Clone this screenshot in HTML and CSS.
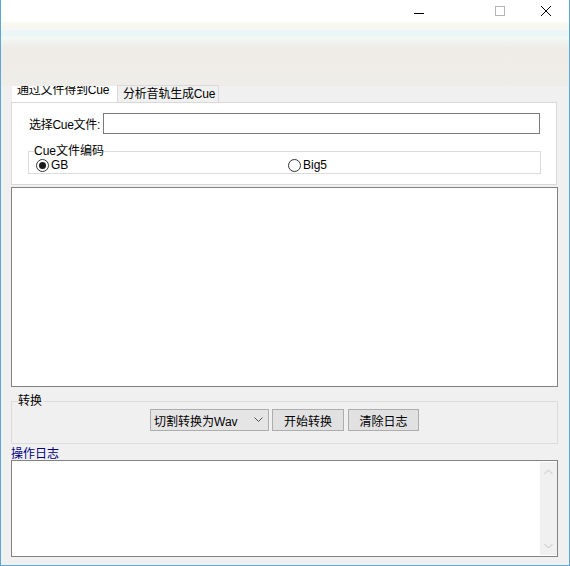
FILE: index.html
```html
<!DOCTYPE html>
<html lang="zh-CN">
<head>
    <meta charset="UTF-8">
    <title>Cue</title>
    <link rel="stylesheet" href="styles.css">
</head>
<body>
    <div class="window">
        <div class="titlebar">
            <span class="caption-btn btn-min">
                <svg width="12" height="12" viewBox="0 0 12 12"><path d="M1 6.5h10" stroke="#000" stroke-width="1"/></svg>
            </span>
            <span class="caption-btn">
                <svg width="12" height="12" viewBox="0 0 12 12"><rect x="1.5" y="1.5" width="9" height="9" fill="none" stroke="#b5b5b5" stroke-width="1"/></svg>
            </span>
            <span class="caption-btn">
                <svg width="12" height="12" viewBox="0 0 12 12"><path d="M1 1l10 10M11 1L1 11" stroke="#000" stroke-width="1"/></svg>
            </span>
        </div>
        <div class="toolstrip"></div>

        <div class="client">
            <!-- 选项卡 -->
            <div class="tabs">
                <div class="tab tab-active"><span>通过文件得到Cue</span></div>
                <div class="tab">分析音轨生成Cue</div>
            </div>
            <div class="tab-page">
                <div class="file-row">
                    <label class="file-label">选择Cue文件:</label>
                    <div class="textbox"></div>
                </div>
                <fieldset class="group group-encoding">
                    <legend>Cue文件编码</legend>
                    <div class="radio-row">
                        <span class="radio checked"><i></i>GB</span>
                        <span class="radio"><i></i>Big5</span>
                    </div>
                </fieldset>
            </div>

            <div class="content-box"></div>

            <fieldset class="group group-convert">
                <legend>转换</legend>
                <div class="convert-row">
                    <div class="combo">
                        <span>切割转换为Wav</span>
                        <svg width="9" height="6" viewBox="0 0 9 6"><path d="M0.5 0.5l4 4 4-4" fill="none" stroke="#555" stroke-width="1"/></svg>
                    </div>
                    <div class="btn">开始转换</div>
                    <div class="btn">清除日志</div>
                </div>
            </fieldset>

            <div class="log-label">操作日志</div>
            <div class="log">
                <div class="log-body"></div>
                <div class="scrollbar">
                    <svg width="9" height="6" viewBox="0 0 9 6"><path d="M0.5 5l4-4 4 4" fill="none" stroke="#c2c2c2" stroke-width="1"/></svg>
                    <svg width="9" height="6" viewBox="0 0 9 6"><path d="M0.5 1l4 4 4-4" fill="none" stroke="#c2c2c2" stroke-width="1"/></svg>
                </div>
            </div>
        </div>
    </div>
</body>
</html>
```
FILE: styles.css
```css
* {
    box-sizing: border-box;
}

body {
    margin: 0;
    font-family: "Liberation Sans", "Noto Sans CJK SC", sans-serif;
    font-size: 12px;
    color: #000;
    background: #fff;
}

.window {
    width: 570px;
    height: 566px;
    border: 1px solid #5ea6d4;
    border-top: none;
    background: #f0f0f0;
    display: flex;
    flex-direction: column;
    overflow: hidden;
}

.titlebar {
    height: 22px;
    background: #fff;
    display: flex;
    justify-content: flex-end;
    align-items: center;
}

.caption-btn {
    width: 46px;
    height: 22px;
    display: flex;
    align-items: center;
    justify-content: center;
}

.btn-min {
    margin-right: 35px;
    padding-top: 4px;
}

.toolstrip {
    height: 64px;
    background: linear-gradient(to bottom,
        #fbfaf3 0px, #f7f6ef 5px, #f2f7f8 8px, #e9f5f7 12px,
        #f4f8f6 16px, #eff2ef 20px, #efece7 26px, #efede9 64px);
}

.client {
    flex: 1;
    padding: 0 11px 0 10px;
    display: flex;
    flex-direction: column;
}

/* 选项卡 */
.tabs {
    display: flex;
    height: 16px;
    padding-left: 1px;
    white-space: nowrap;
    letter-spacing: -0.2px;
}

.tab {
    padding: 0 3px 0 5px;
    line-height: 17px;
    background: #f0f0f0;
    border: 1px solid #d9d9d9;
    border-bottom: none;
    margin-top: -1px;
    height: 17px;
}

.tab-active {
    background: #fff;
    border: none;
    margin-top: 0;
    height: 16px;
    width: 105px;
    padding: 0 0 0 5px;
    overflow: hidden;
}

.tab-active span {
    display: block;
    margin-top: -4px;
}

.tab-page {
    height: 83px;
    margin-right: 1px;
    background: #fff;
    border: 1px solid #d9d9d9;
    padding: 10px 16px 0 17px;
}

.file-row {
    display: flex;
    align-items: center;
    height: 21px;
}

.file-label {
    width: 74px;
    flex-shrink: 0;
    white-space: nowrap;
    letter-spacing: -0.3px;
}

.textbox {
    flex: 1;
    height: 21px;
    border: 1px solid #7a7a7a;
    background: #fff;
}

.group {
    margin: 0;
    border: 1px solid #dcdcdc;
    padding: 0;
}

.group legend {
    padding: 0;
    line-height: 12px;
}

.group-encoding {
    margin: 11px -1px 0 -1px;
    height: 29px;
    padding: 0 0 0 7px;
}

.group-encoding legend {
    margin-left: -2px;
}

.radio-row {
    display: flex;
    height: 15px;
    margin-top: 1px;
    align-items: center;
}

.radio {
    display: flex;
    align-items: center;
    line-height: 13px;
}

.radio.checked {
    width: 252px;
}

.radio i {
    width: 13px;
    height: 13px;
    border: 1px solid #333;
    border-radius: 50%;
    margin-right: 2px;
    display: flex;
    align-items: center;
    justify-content: center;
    background: #fff;
}

.radio.checked i::after {
    content: "";
    width: 7px;
    height: 7px;
    border-radius: 50%;
    background: #1a1a1a;
}

.content-box {
    height: 200px;
    margin-top: 2px;
    background: #fff;
    border: 1px solid #828282;
}

.group-convert {
    margin-top: 8px;
    height: 49px;
}

.group-convert legend {
    margin-left: 6px;
    padding: 0 2px 0 0;
}

.convert-row {
    display: flex;
    gap: 3px;
    padding-left: 138px;
    margin-top: 2px;
}

.combo {
    width: 119px;
    height: 22px;
    border: 1px solid #adadad;
    background: #e5e5e5;
    display: flex;
    align-items: center;
    justify-content: space-between;
    padding: 0 5px 0 3px;
}

.btn {
    height: 22px;
    border: 1px solid #adadad;
    background: #e1e1e1;
    display: flex;
    align-items: center;
    justify-content: center;
    width: 72px;
}

.btn + .btn {
    margin-left: 1px;
    width: 71px;
}

.log-label {
    margin-top: 4px;
    color: #000080;
    line-height: 12px;
    height: 12px;
}

.log {
    height: 97px;
    border: 1px solid #828282;
    background: #fff;
    display: flex;
}

.log-body {
    flex: 1;
}

.scrollbar {
    width: 17px;
    margin: 1px 0;
    background: #f0f0f0;
    display: flex;
    flex-direction: column;
    justify-content: space-between;
    align-items: center;
    padding: 7px 0 6px 0;
}
```
